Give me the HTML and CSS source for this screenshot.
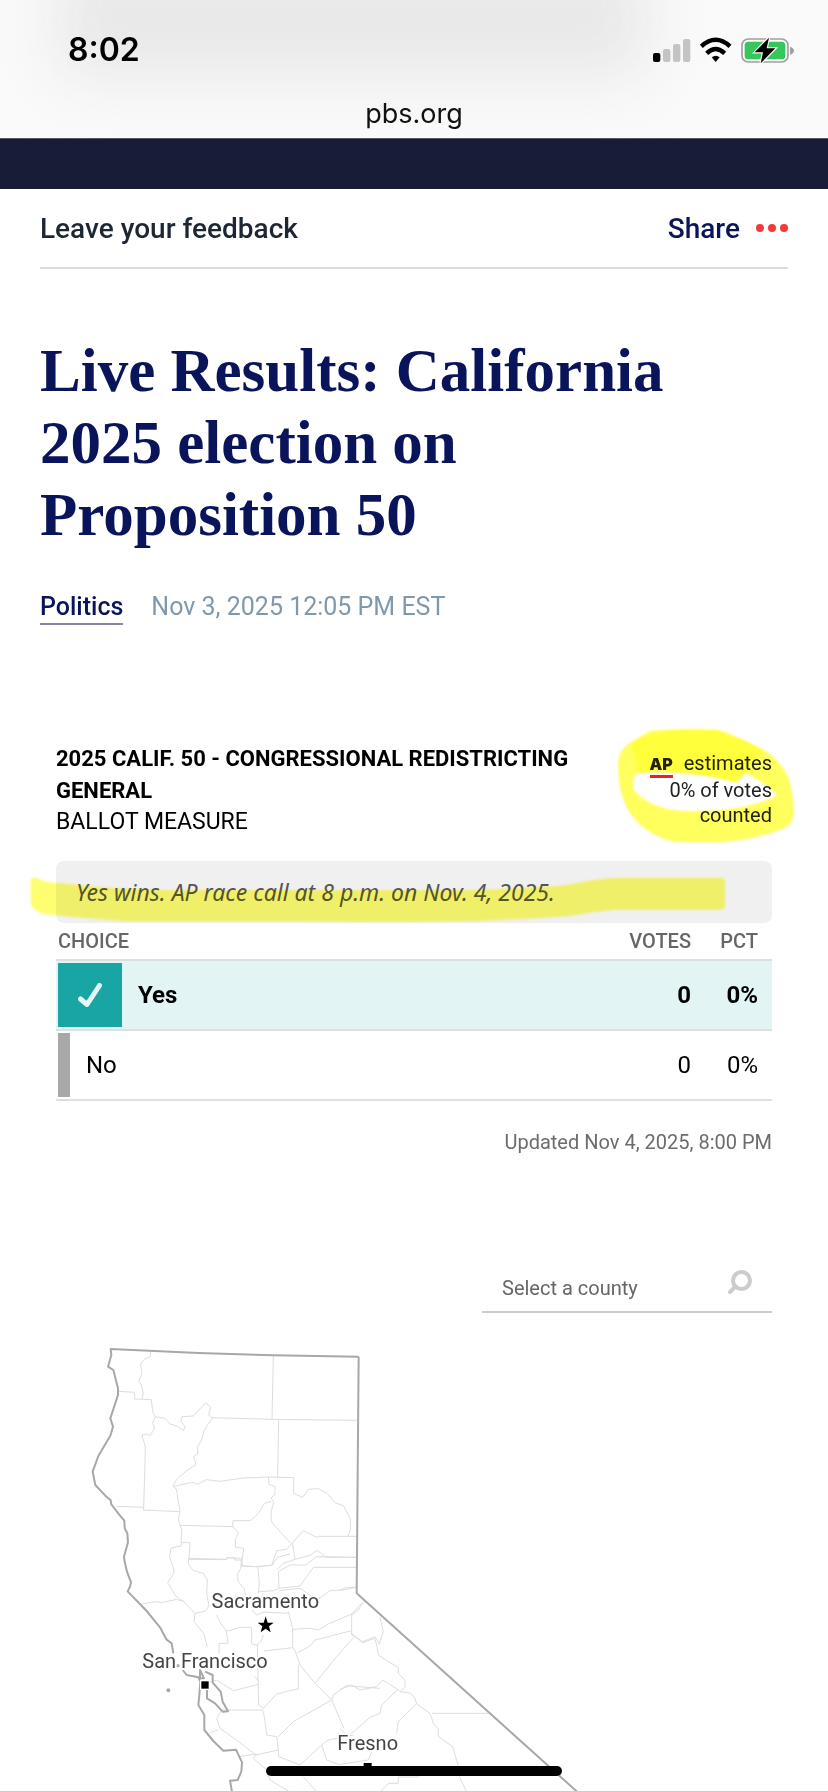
FILE: index.html
```html
<!DOCTYPE html>
<html lang="en">
<head>
<meta charset="utf-8">
<meta name="viewport" content="width=device-width, initial-scale=1">
<title>Live Results: California 2025 election on Proposition 50</title>
<link rel="stylesheet" href="styles.css">
</head>
<body>
<header class="browser">
  <div class="status">
    <span class="clock">8:02</span>
    <svg class="status-icons" viewBox="0 0 429 78" aria-hidden="true">
      <rect x="6" y="48" width="22" height="27" rx="6"/>
      <g fill="#c4c4c4"><rect x="36" y="36" width="22" height="39" rx="6"/><rect x="66" y="21" width="22" height="54" rx="6"/><rect x="96" y="6" width="22" height="69" rx="6"/></g>
      <g fill="none" stroke="#000" stroke-width="13"><path d="M151 28Q194-11 237 28"/><path d="M167 49Q194 23 221 49"/></g>
      <path d="M182 61Q194 51 206 61L194 75Z"/>
      <rect x="273" y="6" width="138" height="69" rx="19" fill="none" stroke="#a0a0a0" stroke-width="5"/>
      <rect x="281" y="14" width="122" height="53" rx="11" fill="#35c759"/>
      <path d="M417 29Q429 33 429 41T417 53Z" fill="#a0a0a0"/>
      <path d="M354 2L311 46H336L329 79L373 34H347Z" stroke="#fafafa" stroke-width="7" paint-order="stroke"/>
    </svg>
  </div>
  <div class="address">pbs.org</div>
</header>
<div class="site-bar"></div>
<main class="page">
  <div class="tools">
    <a class="feedback" href="#feedback">Leave your feedback</a>
    <button class="share" type="button">Share
      <svg class="dots" viewBox="0 0 32 8" aria-hidden="true"><circle cx="4" cy="4" r="4"/><circle cx="16" cy="4" r="4"/><circle cx="28" cy="4" r="4"/></svg>
    </button>
  </div>
  <h1 class="title">Live Results: California 2025 election on Proposition 50</h1>
  <div class="meta"><a class="topic" href="#politics">Politics</a><time class="date">Nov 3, 2025 12:05 PM EST</time></div>

  <section class="results">
    <div class="race">
      <div class="race-name">
        <h2 class="race-title">2025 CALIF. 50 - CONGRESSIONAL REDISTRICTING GENERAL</h2>
        <p class="race-kind">BALLOT MEASURE</p>
      </div>
      <div class="count">
        <p><span class="ap">AP</span>estimates<br>0% of votes<br>counted</p>
        <svg class="marker marker-ring" viewBox="345 45 549 360" aria-hidden="true">
          <path fill-rule="evenodd" d="M450 62Q550 54 655 59Q715 80 765 106Q835 135 866 205Q884 270 881 315Q878 345 845 358Q740 399 620 397L520 395Q440 375 393 314Q350 250 355 150Q358 115 400 92ZM400 205Q405 185 450 180C560 176 630 195 712 218Q720 200 738 190Q790 215 832 255Q790 280 710 294Q600 310 520 300Q440 288 400 238Z"/>
          <path class="marker-deep" d="M395 100Q450 62 550 60L655 62Q750 95 790 125Q745 170 738 190Q720 200 712 218Q560 176 415 190Z"/>
        </svg>
      </div>
    </div>
    <div class="call">
      Yes wins. AP race call at 8 p.m. on Nov. 4, 2025.
      <svg class="marker marker-line" viewBox="78 453 2112 186" preserveAspectRatio="none" aria-hidden="true">
        <path d="M92 510Q100 496 118 508Q145 520 190 520Q330 538 500 540H1400Q1600 535 1700 525Q1800 503 1860 503H2165Q2175 505 2175 520V585Q2175 598 2160 599H1850Q1770 606 1710 618Q1600 626 1450 632Q1200 637 900 634H380Q250 624 130 612Q95 600 92 580Z"/>
      </svg>
    </div>
    <table class="votes">
      <thead><tr><th class="choice">CHOICE</th><th class="num">VOTES</th><th class="pct">PCT</th></tr></thead>
      <tbody>
        <tr class="winner">
          <td class="choice"><span class="option"><span class="tick"><svg viewBox="0 0 24 24" aria-label="Winner"><path d="M2.500 16L9 21.500L21.500 2.500"/></svg></span>Yes</span></td>
          <td class="num">0</td><td class="pct">0%</td>
        </tr>
        <tr>
          <td class="choice"><span class="option"><span class="swatch"></span>No</span></td>
          <td class="num">0</td><td class="pct">0%</td>
        </tr>
      </tbody>
    </table>
    <p class="updated">Updated Nov 4, 2025, 8:00 PM</p>
    <div class="search">
      <input class="county" type="text" placeholder="Select a county" aria-label="Select a county">
      <svg class="lens" viewBox="0 0 24 24" aria-hidden="true"><circle cx="13.500" cy="10.500" r="8.500"/><path d="M7 17L2 22"/></svg>
    </div>
    <svg class="map" viewBox="-42 0 2148 1383" role="img" aria-label="Map of California counties">
      <g class="counties">
        <path d="M242 66L240 80L222 88L212 102L216 130L206 155L214 165L220 190L216 206M145 184L194 187V207L244 209L248 245L256 260L248 280L254 295L240 317L228 312L216 315L226 350L225 400L221 532M256 260L285 265L300 282L320 288L340 302L346 290L333 275L336 260L370 258L407 218L422 232L416 254L428 265L414 283L402 303L395 330L382 352L384 370L371 380L378 404L350 422L322 446L309 466M424 263L606 268L862 271M610 78L606 268M626 270L623 442M309 470L322 467L365 457L384 462L409 449L450 454L520 444L595 441L671 443V490L698 502L715 478L745 476L772 491L795 518L820 527L841 566V600L834 618M595 441L597 463L615 470V493L603 504L611 517L603 547L604 575L662 640M603 514L583 520L568 547L542 572H489L488 590L330 586M488 590L505 608L496 628V652L521 655L514 710M140 529L221 532L220 540L328 545M309 466L320 480L324 510L330 540L325 570L335 600L333 648L303 654L299 680L312 720M335 638H360L357 688L470 689V683L494 684V690H514L517 708L560 710L605 706L620 662L650 658L700 602L740 622L745 619H860M668 640L675 688L720 676L742 661L768 682H860M675 688L640 700L620 720"/>
        <path transform="translate(0 660)" d="M310 55L312 70L293 98L317 138L340 154L375 190L372 215L401 250L412 290M215 162L258 155L275 158L320 148L340 154M375 190L405 184L417 168L410 130L412 90L400 70L370 62L355 42V25L470 28V23L515 25L512 55L502 75L505 95L522 115L530 150M514 48L563 50L568 95L565 130M563 50L608 45L622 22L660 12M568 125L610 122L627 115L625 65L660 45H707L740 20L858 22M627 115L690 108L730 52H858M627 122L690 115L740 150L780 122L820 120L858 112M440 195L450 218L469 242H478L510 232H545V282L562 285L575 270L580 255M469 242L474 280H448L447 310M545 180L560 195L582 186L650 190L655 185L668 235V290L678 310L690 345L735 400L785 450L822 535M668 238L720 235L745 240L775 222L845 192L875 160M845 192V255L878 275L915 260L930 285M683 308L720 288L735 270L845 242M582 303L668 293M562 285L566 465L580 475L620 432L660 422L685 417V345M555 380L566 395M410 400L440 390L490 422L565 403M455 480H578L583 500L590 555L620 560L625 600L558 615L505 574L450 535L440 505ZM625 560L670 515L785 450L790 435L830 407L930 415M735 400L800 320L850 263M625 600L626 620L690 645L755 585L775 570L850 555M755 585L770 630L810 645M420 548L445 540M505 620L560 612L550 625L590 660L600 690L660 726M700 680L740 726"/>
        <path transform="translate(810 660)" d="M0 120L20 112H48M73 152L55 180L35 195M35 250L68 278L104 265L110 285L115 315L145 335L175 352V370L195 390V410L182 425L145 400L128 390L110 410L60 420L35 405L0 418M120 202L130 245L118 280M182 425L212 430L225 445L230 462L270 490L280 520L294 535L296 560L338 590L354 645M276 490H445M175 417L125 465L120 490L90 502L35 550M228 463L175 515L170 550M0 535L15 550M95 605L85 630L0 643M358 680L380 726M120 726L145 700H175V681H238"/>
      </g>
      <g class="coast">
        <path d="M866 80L860 790L1860 1690M866 80L610 76L385 69L122 57L124 75L114 110L130 120L144 175V195L121 265L129 290L121 317L85 378L68 425L76 465L106 497L122 511L124 523L150 557L163 572L164 595L172 610L174 637L162 680L163 690L171 725L183 757L180 770L173 784L230 843L270 892L289 928L305 940L310 970M338 1020L350 1035L385 1042L391 1055L388 1095L385 1125L403 1155V1200L430 1233L460 1262L498 1259L516 1297L514 1325L503 1350L480 1352L486 1386"/>
        <path d="M390 1020L402 1045H390ZM405 1025L428 1035V1058L452 1085L458 1115L474 1144L458 1145L435 1120L411 1105V1080"/>
        <circle cx="295" cy="1081" r="3"/><circle cx="324" cy="1007" r="2"/>
      </g>
      <g class="cities">
        <text x="586" y="834">Sacramento</text><text x="405" y="1013">San Francisco</text><text x="893" y="1259">Fresno</text>
      </g>
      <path d="M587 859L593 878H611L597 889L602 907L587 896L572 907L577 889L563 878H581Z"/>
      <rect x="392" y="1052" width="26" height="26" stroke="#fff" stroke-width="4"/><rect x="881" y="1299" width="24" height="24"/>
    </svg>
  </section>
</main>
<div class="home-bar"></div>
</body>
</html>
```
FILE: styles.css
```css
* { box-sizing: border-box; }
body { margin: 0; background: #fff; color: #000; font-family: Roboto, "Liberation Sans", sans-serif; }
p, h1, h2 { margin: 0; }
a { color: inherit; text-decoration: none; }

.browser { position: relative; overflow: hidden; height: 138px; background: #fafafa; font-family: Inter, sans-serif; }
.browser::before { content: ""; position: absolute; left: 7%; right: 22%; top: -40px; height: 116px; background: #e8e8e8; filter: blur(30px); }
.status { position: relative; display: flex; justify-content: space-between; align-items: center; padding: 30px 34px 0 68px; }
.clock { font-size: 32px; font-weight: 600; line-height: 40px; }
.status-icons { width: 143px; height: 26px; }
.address { position: relative; padding-top: 26px; text-align: center; font-size: 27px; line-height: 36px; color: #111; }
.site-bar { height: 51px; background: #191c37; border-top: 1px solid #55576a; }

.page { padding: 0 40px; border-bottom: 1px solid #ccc; }
.tools { display: flex; justify-content: space-between; align-items: center; height: 80px; border-bottom: 2px solid #d8dce1; font-size: 28px; font-weight: 500; }
.feedback { color: #1c2733; }
.share { display: flex; align-items: center; gap: 16px; padding: 0; border: 0; background: none; font: inherit; color: #0a145a; }
.dots { width: 32px; height: 8px; fill: #f53838; }
.title { max-width: 640px; margin-top: 66px; font-family: "Liberation Serif", serif; font-size: 61px; line-height: 72px; color: #0a145a; }
.meta { display: flex; gap: 28px; margin-top: 40px; font-size: 25px; line-height: 32px; color: #8098ac; }
.topic { font-weight: 500; color: #0a145a; border-bottom: 2px solid #8a86a0; }

.results { margin: 118px 16px 0; }
.race { display: flex; justify-content: space-between; }
.race-name { max-width: 540px; }
.race-title { font-size: 22px; line-height: 32px; }
.race-kind { font-size: 23px; line-height: 30px; }
.count { position: relative; padding-top: 8px; font-size: 20px; line-height: 25px; text-align: right; color: #222; }
.ap { display: inline-block; margin-right: 11px; border-bottom: 3px solid #ec1f27; font-family: Inter, sans-serif; font-size: 16px; font-weight: 900; line-height: 22px; }
.marker { position: absolute; fill: #ffff5e; mix-blend-mode: multiply; overflow: visible; filter: blur(1px); }
.marker-deep { fill: #ffff3c; }
.marker-ring { right: -26px; top: -18px; width: 183px; height: 120px; }
.marker-line { left: -30px; top: 0; width: calc(100% - 12px); height: 100%; fill: #fffe70; }
.call { position: relative; margin-top: 24px; padding: 0 20px; border-radius: 8px; background: #f0f0f0; font-family: "Noto Sans", sans-serif; font-size: 23px; font-style: italic; line-height: 62px; color: #555; }

.votes { width: 100%; border-collapse: collapse; font-size: 24px; }
.votes tr { border-bottom: 2px solid #dde0e1; }
.votes th { height: 37px; padding: 0; font-size: 20px; font-weight: 500; color: #666; }
.votes td { height: 70px; padding: 0; }
.votes .choice { padding-left: 2px; text-align: left; }
.votes .num { width: 90px; text-align: right; }
.votes .pct { width: 81px; padding-right: 14px; text-align: right; }
.winner { background: #e2f4f4; font-weight: 700; }
.option { display: flex; align-items: center; gap: 16px; }
.tick { display: grid; place-items: center; width: 64px; height: 64px; background: #18a5a4; }
.tick svg { width: 24px; height: 24px; fill: none; stroke: #e6f8f6; stroke-width: 5; stroke-linecap: round; stroke-linejoin: round; }
.swatch { width: 12px; height: 64px; background: #a8a8a8; }
.updated { margin-top: 28px; font-size: 20px; line-height: 26px; text-align: right; color: #6c6c6c; }
.search { display: flex; justify-content: space-between; width: 290px; height: 56px; margin: 102px 0 0 auto; padding: 13px 20px 0; border-bottom: 2px solid #ccc; }
.county { width: 190px; height: 36px; padding: 0; border: 0; outline: 0; background: none; font: inherit; font-size: 20px; color: #666; }
.county::placeholder { color: #666; opacity: 1; }
.lens { width: 24px; height: 24px; fill: none; stroke: #ccc; stroke-width: 4; stroke-linecap: round; }
.map { display: block; width: 100%; margin-top: 17px; }
.counties { fill: none; stroke: #ddd; stroke-width: 3; stroke-linejoin: round; }
.coast { fill: none; stroke: #a8a8a8; stroke-width: 6; stroke-linejoin: round; }
.cities { fill: #444; stroke: #fff; stroke-width: 10; paint-order: stroke; font-size: 60px; text-anchor: middle; }
.home-bar { position: fixed; left: 50%; bottom: 16px; width: 296px; height: 10px; margin-left: -148px; border-radius: 5px; background: #000; }
```
